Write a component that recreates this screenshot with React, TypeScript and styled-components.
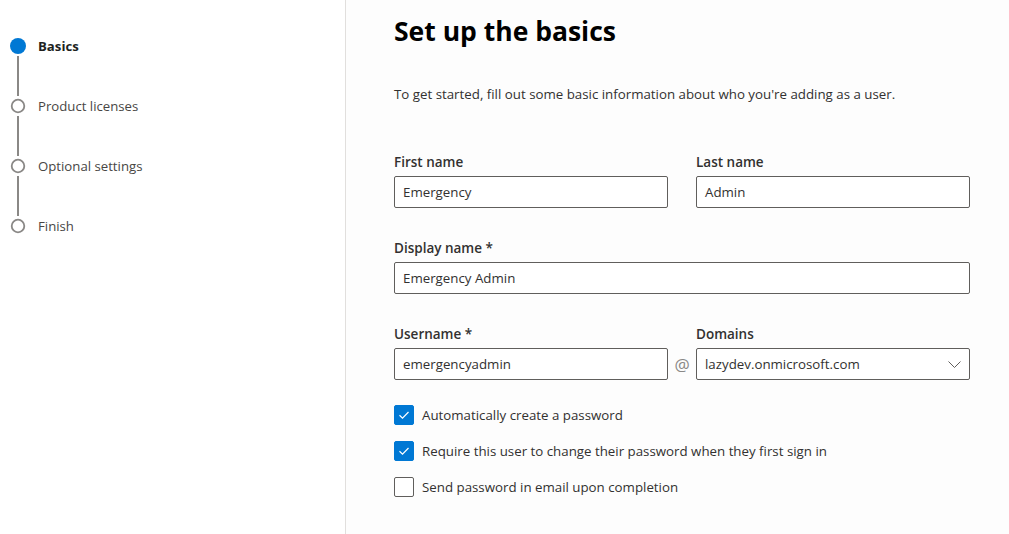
import styled, { createGlobalStyle } from 'styled-components';

const GlobalStyle = createGlobalStyle`
	html, body {
		margin: 0;
		padding: 0;
		background: #ffffff;
	}
	body {
		font-family: 'Open Sans', 'Noto Sans', sans-serif;
		color: #323130;
	}
`;

const STEPS = ['Basics', 'Product licenses', 'Optional settings', 'Finish'];

const CheckIcon = () => (
	<svg width="12" height="12" viewBox="0 0 12 12" fill="none">
		<path d="M1.5 6.3 L4.5 9.2 L10.5 3" stroke="#ffffff" strokeWidth="1.2" />
	</svg>
);

const ChevronDown = () => (
	<svg width="13" height="7" viewBox="0 0 13 7" fill="none">
		<path d="M0.5 0.5 L6.5 6.5 L12.5 0.5" stroke="#605e5c" strokeWidth="1" />
	</svg>
);

const App = () => {
	return (
		<Page>
			<GlobalStyle />
			<Sidebar>
				{STEPS.map((step, i) => (
					<div key={step}>
						{i > 0 && <Connector />}
						<Step>
							<Dot $active={i === 0} />
							<StepLabel $active={i === 0}>{step}</StepLabel>
						</Step>
					</div>
				))}
			</Sidebar>

			<Main>
				<Title>Set up the basics</Title>
				<Intro>To get started, fill out some basic information about who you're adding as a user.</Intro>

				<Row>
					<Field>
						<Label>First name</Label>
						<Input>Emergency</Input>
					</Field>
					<Field>
						<Label>Last name</Label>
						<Input>Admin</Input>
					</Field>
				</Row>

				<Row>
					<Field>
						<Label>Display name *</Label>
						<Input>Emergency Admin</Input>
					</Field>
				</Row>

				<Row>
					<Field>
						<Label>Username *</Label>
						<Input>emergencyadmin</Input>
					</Field>
					<At>@</At>
					<Field>
						<Label>Domains</Label>
						<Select>
							<span>lazydev.onmicrosoft.com</span>
							<ChevronDown />
						</Select>
					</Field>
				</Row>

				<Checks>
					<CheckRow>
						<Box $checked>
							<CheckIcon />
						</Box>
						<CheckText>Automatically create a password</CheckText>
					</CheckRow>
					<CheckRow>
						<Box $checked>
							<CheckIcon />
						</Box>
						<CheckText>Require this user to change their password when they first sign in</CheckText>
					</CheckRow>
					<CheckRow>
						<Box />
						<CheckText>Send password in email upon completion</CheckText>
					</CheckRow>
				</Checks>
			</Main>
		</Page>
	);
};

const Page = styled.div`
	display: flex;
	width: 1009px;
	height: 534px;
	overflow: hidden;
`;

const Sidebar = styled.aside`
	width: 346px;
	flex-shrink: 0;
	border-right: 1px solid #e1dfdd;
	padding-top: 36px;
	box-sizing: border-box;
`;

const Step = styled.div`
	display: flex;
	align-items: center;
	height: 20px;
	padding-left: 10px;
`;

const Dot = styled.span<{ $active?: boolean }>`
	box-sizing: border-box;
	width: 16px;
	height: 16px;
	border-radius: 50%;
	flex-shrink: 0;
	background: ${(p) => (p.$active ? '#0078d4' : '#ffffff')};
	border: ${(p) => (p.$active ? 'none' : '2px solid #8a8886')};
	transform: ${(p) => (p.$active ? 'none' : 'scale(0.9)')};
`;

const StepLabel = styled.span<{ $active?: boolean }>`
	margin-left: 12px;
	font-size: 13.2px;
	font-weight: ${(p) => (p.$active ? 700 : 400)};
	color: ${(p) => (p.$active ? '#201f1e' : '#484644')};
`;

const Connector = styled.div`
	width: 2px;
	height: 40px;
	margin-left: 17px;
	background: #8a8886;
`;

const Main = styled.main`
	flex: 1;
	padding: 12px 0 0 48px;
	background: #fdfdfd;
`;

const Title = styled.h1`
	margin: 0;
	font-size: 26.5px;
	font-weight: 700;
	color: #000000;
	line-height: 38px;
`;

const Intro = styled.p`
	margin: 34px 0 0;
	font-size: 13.3px;
	line-height: 20px;
	color: #323130;
`;

const Row = styled.div`
	display: flex;
	align-items: flex-end;
	gap: 28px;
	width: 576px;
	margin-top: 48px;
	& + & {
		margin-top: 30px;
	}
`;

const Field = styled.div`
	flex: 1;
	display: flex;
	flex-direction: column;
`;

const Label = styled.label`
	font-size: 13.5px;
	font-weight: 600;
	color: #323130;
	line-height: 20px;
	margin-bottom: 4px;
`;

const Input = styled.div`
	box-sizing: border-box;
	height: 32px;
	border: 1px solid #605e5c;
	border-radius: 2px;
	padding: 0 8px;
	display: flex;
	align-items: center;
	font-size: 13.3px;
	color: #323130;
	background: #ffffff;
`;

const Select = styled(Input)`
	justify-content: space-between;
	padding-right: 8px;
`;

const At = styled.span`
	width: 0;
	height: 32px;
	display: flex;
	align-items: center;
	justify-content: center;
	margin: 0 -14px;
	font-size: 17px;
	color: #8a8886;
`;

const Checks = styled.div`
	display: flex;
	flex-direction: column;
	gap: 16px;
	margin-top: 25px;
`;

const CheckRow = styled.div`
	display: flex;
	align-items: center;
	gap: 8px;
`;

const Box = styled.span<{ $checked?: boolean }>`
	box-sizing: border-box;
	width: 20px;
	height: 20px;
	border-radius: 2px;
	display: flex;
	align-items: center;
	justify-content: center;
	background: ${(p) => (p.$checked ? '#0078d4' : '#ffffff')};
	border: 1px solid ${(p) => (p.$checked ? '#0078d4' : '#605e5c')};
`;

const CheckText = styled.span`
	font-size: 13.3px;
	color: #323130;
	line-height: 20px;
`;

export default App;
